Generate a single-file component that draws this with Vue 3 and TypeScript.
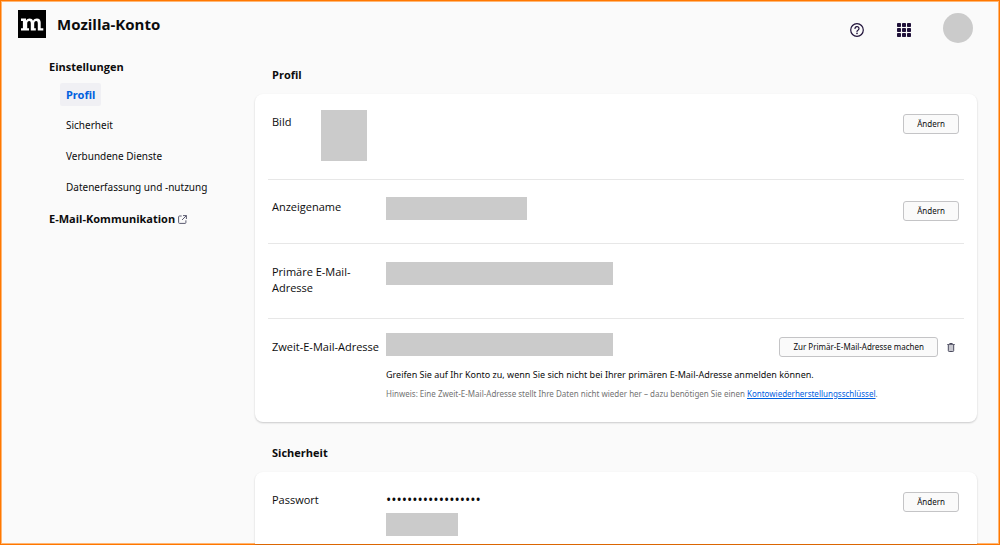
<script setup lang="ts">
import { ref } from 'vue'

interface NavItem {
  label: string
  target: string
}

const navItems: NavItem[] = [
  { label: 'Profil', target: '#profil' },
  { label: 'Sicherheit', target: '#sicherheit' },
  { label: 'Verbundene Dienste', target: '#dienste' },
  { label: 'Datenerfassung und -nutzung', target: '#daten' },
]
const active = ref('Profil')
const passwordMask = '•'.repeat(18)
const dots = [0, 5, 10]
</script>

<template>
  <div class="page">
    <header class="top">
      <svg class="logo" viewBox="0 0 28 28" role="img" aria-label="Mozilla">
        <rect width="28" height="28" fill="#000" />
        <path
          fill="#fff"
          d="M3 8.600h5v1.900c.8-1.400 2-2.100 3.600-2.100 1.700 0 2.900.8 3.400 2.400.8-1.600 2.100-2.400 3.900-2.400 2.500 0 3.800 1.500 3.800 4.200v5.700H25.300V20.600h-5.500v-7c0-1.700-.5-2.500-1.600-2.500-1.300 0-2 1-2 2.800v4.400h1.600V20.600h-5v-7c0-1.700-.5-2.500-1.600-2.500-1.300 0-2 1-2 2.800v4.400h1.800V20.600H3v-2.300h1.900v-7.200H3z"
        />
      </svg>
      <h1>Mozilla-Konto</h1>
      <div class="tools">
        <button class="icon" type="button" aria-label="Hilfe">
          <svg width="14" height="14" viewBox="0 0 14 14" fill="none" stroke="#20123a">
            <circle cx="7" cy="7" r="6.300" stroke-width="1.200" />
            <path d="M5 5.500a2 1.900 0 1 1 3.200 1.500C7.400 7.500 7 7.800 7 8.500" stroke-width="1.200" stroke-linecap="round" />
            <circle cx="7" cy="10.400" r=".8" fill="#20123a" stroke="none" />
          </svg>
        </button>
        <button class="icon" type="button" aria-label="Mozilla-Produkte">
          <svg width="14" height="14" viewBox="0 0 14 14" fill="#20123a">
            <template v-for="y in dots" :key="y">
              <rect v-for="x in dots" :key="x" :x="x" :y="y" width="4" height="4" rx=".8" />
            </template>
          </svg>
        </button>
        <button class="avatar" type="button" aria-label="Kontomenü"></button>
      </div>
    </header>

    <div class="body">
      <nav class="side">
        <h2>Einstellungen</h2>
        <ul>
          <li v-for="item in navItems" :key="item.label">
            <a :href="item.target" :class="{ active: active === item.label }" @click="active = item.label">{{ item.label }}</a>
          </li>
        </ul>
        <a class="mail" href="#kommunikation">
          E-Mail-Kommunikation
          <svg width="9" height="9" viewBox="0 0 9 9" fill="none" stroke="#5b5b70" stroke-linecap="round" stroke-linejoin="round">
            <path d="M3.300 1H1.500Q.6 1 .6 1.900V7.500Q.6 8.400 1.500 8.400H7Q7.900 8.400 7.900 7.500V5.700M5.400.6H8.400V3.600M8.200.8 4.300 4.700" />
          </svg>
        </a>
      </nav>

      <main>
        <section id="profil">
          <h2>Profil</h2>
          <div class="card">
            <div class="row picture">
              <h3>Bild</h3>
              <div class="value"><div class="block photo"></div></div>
              <button class="btn" type="button">Ändern</button>
            </div>
            <div class="row name">
              <h3>Anzeigename</h3>
              <div class="value"><div class="block medium"></div></div>
              <button class="btn" type="button">Ändern</button>
            </div>
            <div class="row primary">
              <h3>Primäre E-Mail-Adresse</h3>
              <div class="value"><div class="block wide"></div></div>
            </div>
            <div class="row second">
              <h3>Zweit-E-Mail-Adresse</h3>
              <div class="value">
                <div class="line">
                  <div class="block wide"></div>
                  <div class="actions">
                    <button class="btn" type="button">Zur Primär-E-Mail-Adresse machen</button>
                    <button class="icon" type="button" aria-label="E-Mail-Adresse entfernen">
                      <svg width="8" height="9" viewBox="0 0 8 9" fill="none" stroke="#4a4a5e">
                        <path d="M.3 1.500H7.700M2.700 1.300V.5H5.300V1.300" />
                        <path d="M1.300 1.800V7.600Q1.300 8.500 2.200 8.500H5.800Q6.700 8.500 6.700 7.600V1.800" fill="#c9c9d0" />
                      </svg>
                    </button>
                  </div>
                </div>
                <p class="info">Greifen Sie auf Ihr Konto zu, wenn Sie sich nicht bei Ihrer primären E-Mail-Adresse anmelden können.</p>
                <p class="hint">
                  Hinweis: Eine Zweit-E-Mail-Adresse stellt Ihre Daten nicht wieder her – dazu benötigen Sie einen
                  <a href="#schluessel">Kontowiederherstellungsschlüssel</a>.
                </p>
              </div>
            </div>
          </div>
        </section>

        <section id="sicherheit" class="last">
          <h2>Sicherheit</h2>
          <div class="card">
            <div class="row password">
              <h3>Passwort</h3>
              <div class="value">
                <p class="mask">{{ passwordMask }}</p>
                <div class="block small"></div>
              </div>
              <button class="btn" type="button">Ändern</button>
            </div>
          </div>
        </section>
      </main>
    </div>
  </div>
</template>

<style>
body {
  background: #fafafa;
}
</style>

<style scoped>
* {
  box-sizing: border-box;
}
.page {
  min-height: 100vh;
  display: flex;
  flex-direction: column;
  border: 1px solid #ff7700;
  box-shadow: inset 0 0 0 1px #ffb673;
  background: #fafafa;
  color: #0c0c0d;
  font: 11px/16px "Open Sans", "Noto Sans", sans-serif;
}
h1, h2, h3, p, ul {
  margin: 0;
  padding: 0;
}
ul {
  list-style: none;
}
h2 {
  font-size: 11px;
  line-height: 16px;
  font-weight: 700;
}
h3 {
  font-size: 11px;
  line-height: 16px;
  font-weight: 400;
}
a {
  color: inherit;
  text-decoration: none;
}
button {
  font-family: inherit;
  color: inherit;
  cursor: pointer;
}
.top {
  display: flex;
  align-items: flex-start;
  padding: 9px 26px 0 17px;
}
.logo {
  width: 28px;
  height: 28px;
}
h1 {
  margin-left: 11px;
  font-size: 15px;
  line-height: 28px;
  font-weight: 700;
}
.tools {
  display: flex;
  align-items: center;
  margin-left: auto;
  padding-top: 3px;
}
.icon {
  display: flex;
  padding: 0;
  border: 0;
  background: none;
}
.tools .icon {
  padding-top: 4px;
}
.tools .icon + .icon {
  margin-left: 33px;
}
.avatar {
  width: 30px;
  height: 30px;
  margin-left: 32px;
  padding: 0;
  border: 0;
  border-radius: 50%;
  background: #cbcbcb;
}
.body {
  flex: 1;
  display: flex;
  padding-right: 22px;
}
.side {
  flex: 0 0 254px;
  padding: 16px 0 0 48px;
}
.side ul {
  padding: 8px 0 0 11px;
  display: grid;
  gap: 8px;
  justify-items: start;
}
.side li {
  display: flex;
}
.side li a {
  padding: 3px 6px;
  border-radius: 2px;
  font: 10px/17px "Noto Sans", "Open Sans", sans-serif;
}
.side li a.active {
  background: #f0f0f4;
  color: #0060df;
  font-size: 11px;
  font-weight: 700;
}
.mail {
  display: flex;
  align-items: center;
  gap: 3px;
  margin-top: 12px;
  font-weight: 700;
}
main {
  flex: 1;
  min-width: 0;
  display: flex;
  flex-direction: column;
  padding-top: 24px;
}
main h2 {
  padding-left: 17px;
  margin-bottom: 11px;
}
.card {
  padding: 0 13px;
  border-radius: 8px;
  background: #fff;
  box-shadow: 0 1px 2px rgba(12, 12, 13, 0.2);
}
.last {
  flex: 1;
  display: flex;
  flex-direction: column;
  margin-top: 23px;
}
.last .card {
  flex: 1;
  border-radius: 8px 8px 0 0;
}
.row {
  display: flex;
  align-items: flex-start;
  padding: 16px 5px 16px 4px;
}
.row + .row {
  border-top: 1px solid #e7e7e7;
}
.row h3 {
  flex: 0 0 114px;
  padding-top: 4px;
}
.picture h3 {
  flex-basis: 49px;
}
.value {
  flex: 1;
  min-width: 0;
}
.block {
  height: 23px;
  background: #cbcbcb;
}
.photo {
  width: 46px;
  height: 51px;
}
.medium {
  width: 141px;
}
.wide {
  width: 227px;
}
.small {
  width: 72px;
}
.btn {
  height: 20px;
  padding: 0 13px;
  border: 1px solid #c4c4c6;
  border-radius: 3px;
  background: #fafafa;
  font: 8px/18px "Noto Sans", "Open Sans", sans-serif;
}
.row > .btn {
  margin-top: 4px;
}
.line {
  display: flex;
  align-items: flex-start;
  justify-content: space-between;
}
.actions {
  display: flex;
  align-items: center;
  gap: 9px;
  padding: 4px 4px 0 0;
}
.info {
  margin-top: 10px;
  font: 9px/16px "Noto Sans", "Open Sans", sans-serif;
}
.hint {
  margin-top: 3px;
  font: 8px/16px "Noto Sans", "Open Sans", sans-serif;
  color: #737373;
}
.hint a {
  color: #0060df;
  text-decoration: underline;
}
.picture {
  padding-bottom: 18px;
}
.name {
  padding-top: 17px;
  padding-bottom: 22px;
}
.primary {
  padding-top: 18px;
  padding-bottom: 22px;
}
.name h3,
.primary h3 {
  padding-top: 2px;
}
.second {
  padding-top: 14px;
  padding-bottom: 20px;
}
.second h3 {
  padding-top: 6px;
}
.password {
  padding-bottom: 8px;
}
.mask {
  padding: 4px 0 5px;
  font-size: 14px;
  line-height: 16px;
}
</style>
